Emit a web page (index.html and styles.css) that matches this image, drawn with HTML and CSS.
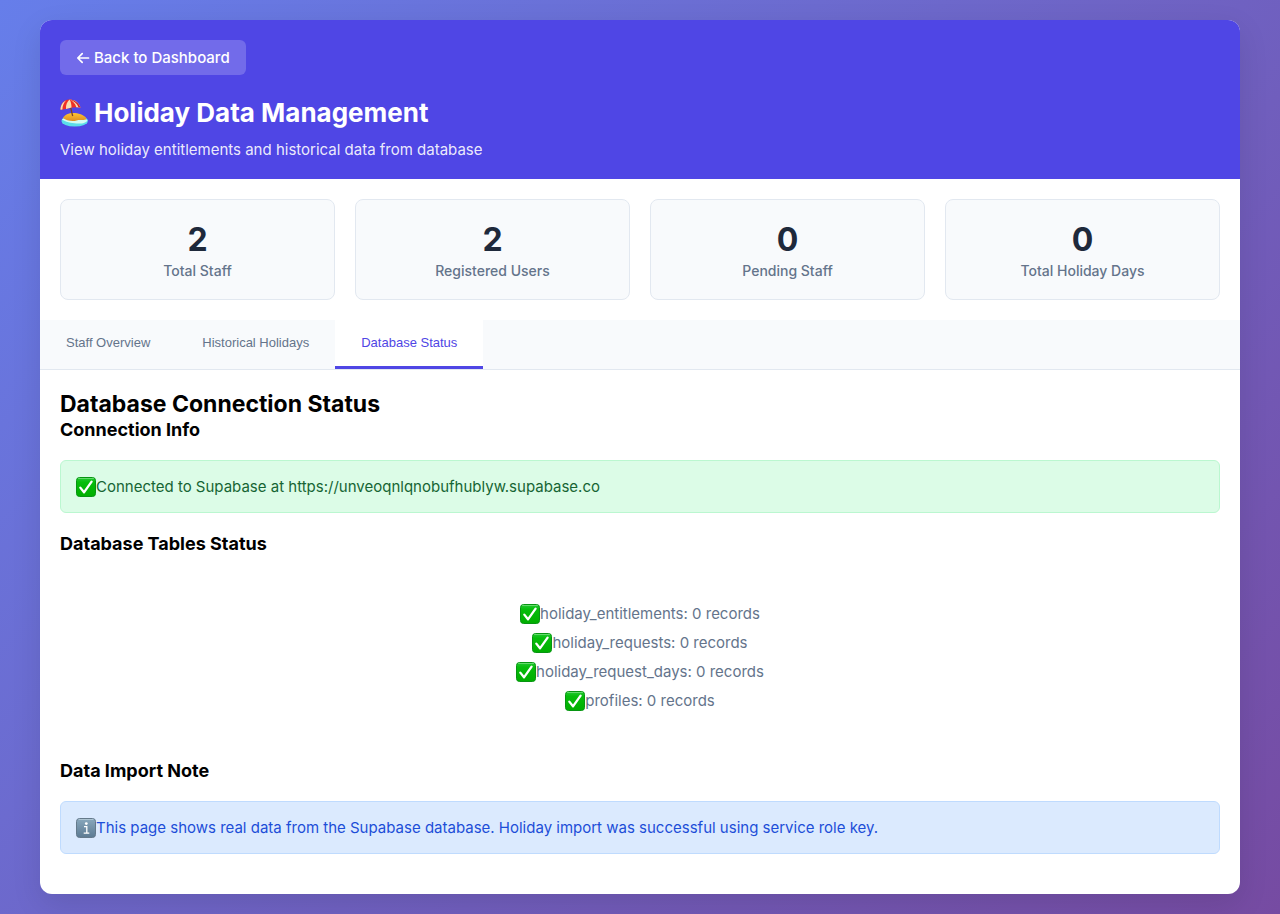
FILE: index.html
```html
<!DOCTYPE html>
<html lang="en">
<head>
<meta charset="utf-8">
<meta name="viewport" content="width=device-width, initial-scale=1">
<title>Holiday Data Management</title>
<link rel="stylesheet" href="styles.css">
</head>
<body>
<svg class="defs" aria-hidden="true">
  <defs>
    <linearGradient id="green" x1="0" y1="0" x2="0" y2="1"><stop offset="0" stop-color="#25c935"/><stop offset=".25" stop-color="#06bd0b"/><stop offset="1" stop-color="#00ae00"/></linearGradient>
    <linearGradient id="steel" x1="0" y1="0" x2="0" y2="1"><stop offset="0" stop-color="#89a8bd"/><stop offset="1" stop-color="#5c7a92"/></linearGradient>
    <linearGradient id="sand" x1="0" y1="0" x2="0" y2="1"><stop offset="0" stop-color="#ffc52e"/><stop offset="1" stop-color="#dc8d24"/></linearGradient>
    <symbol id="check" viewBox="0 0 20 20">
      <rect x=".5" y=".5" width="19" height="19" rx="3" fill="url(#green)" stroke="#079512"/>
      <path d="M2.5 1.5h15" stroke="#75df7b" stroke-width=".8" stroke-linecap="round"/>
      <path d="M4.300 10.600 8 15.300 15.600 4.600" fill="none" stroke="#fff" stroke-width="2.300" stroke-linecap="round" stroke-linejoin="round"/>
    </symbol>
  </defs>
</svg>
<main class="container">
  <header class="header">
    <a class="back" href="#"><svg class="arrow" viewBox="0 0 14 14" aria-hidden="true"><path d="M12.5 7H2M6.2 2.6 1.8 7l4.4 4.4"/></svg>Back to Dashboard</a>
    <h1 class="title"><svg class="beach" viewBox="0 0 28 28" aria-hidden="true">
      <ellipse cx="14.7" cy="22" rx="13.2" ry="5.6" fill="#5bdde9"/>
      <path d="M2 20.5C4 18 9 21 13 21s9-3 14.500 0c-1 3-6 4-11 3.500S5 23 2 20.500Z" fill="#d3fbf4"/>
      <path d="M3 19c1.500-3.500 7-5.500 12-5s11 3 11.500 6c-3 2-6 0-10 1.500S6 21.500 3 19Z" fill="url(#sand)"/>
      <path d="M10.500 8 12.700 17" stroke="#7b4528" stroke-width="1.300"/>
      <path d="M.5 10.800C.3 5 4 .5 9.500.6S19 4 20.500 8.600C17 8 13 8.200 10 9S4 10.500.5 10.800Z" fill="#ef3025"/>
      <path d="M.5 10.800C.4 7 2.500 3 6 1.500 3.500 4 2.500 7 2.400 10.600ZM9.500.6C7 3 5.800 6 6 9.900L11.500 8.600C11.500 5.500 11 3 9.500.6ZM9.500.6C13 2 15.500 5 16.300 8.200l4.200.4C19 4 15 .7 9.500.6Z" fill="#f7dfb2"/>
      <path d="M9.500.6C15 1 18.500 4 20.500 8.600L18.500 8.300C17 4.500 14 2 9.500.6Z" fill="#d51e22"/>
    </svg>Holiday Data Management</h1>
    <p class="subtitle">View holiday entitlements and historical data from database</p>
  </header>
  <section class="stats" aria-label="Summary">
    <div class="stat"><div class="number">2</div><div class="label">Total Staff</div></div>
    <div class="stat"><div class="number">2</div><div class="label">Registered Users</div></div>
    <div class="stat"><div class="number">0</div><div class="label">Pending Staff</div></div>
    <div class="stat"><div class="number">0</div><div class="label">Total Holiday Days</div></div>
  </section>
  <nav class="tabs">
    <button class="tab" type="button">Staff Overview</button>
    <button class="tab" type="button">Historical Holidays</button>
    <button class="tab active" type="button">Database Status</button>
  </nav>
  <section class="content">
    <h2 class="heading">Database Connection Status</h2>
    <h3 class="subheading">Connection Info</h3>
    <div class="alert success"><svg class="icon" aria-hidden="true"><use href="#check"/></svg>Connected to Supabase at https://unveoqnlqnobufhublyw.supabase.co</div>
    <h3 class="subheading">Database Tables Status</h3>
    <ul class="tables">
      <li class="row"><svg class="icon" aria-hidden="true"><use href="#check"/></svg>holiday_entitlements: 0 records</li>
      <li class="row"><svg class="icon" aria-hidden="true"><use href="#check"/></svg>holiday_requests: 0 records</li>
      <li class="row"><svg class="icon" aria-hidden="true"><use href="#check"/></svg>holiday_request_days: 0 records</li>
      <li class="row"><svg class="icon" aria-hidden="true"><use href="#check"/></svg>profiles: 0 records</li>
    </ul>
    <h3 class="subheading">Data Import Note</h3>
    <div class="alert info"><svg class="icon" viewBox="0 0 20 20" aria-hidden="true"><rect x=".5" y=".5" width="19" height="19" rx="3" fill="url(#steel)" stroke="#64798a"/><path d="M2.500 1.500h15" stroke="#b7cbd8" stroke-width=".8"/><circle cx="10.300" cy="5.600" r="1.400" fill="#fff"/><path d="M8 8.700h2.800v6M7.700 15.100h5.600" fill="none" stroke="#fff" stroke-width="1.300"/></svg>This page shows real data from the Supabase database. Holiday import was successful using service role key.</div>
  </section>
</main>
</body>
</html>
```
FILE: styles.css
```css
* { box-sizing: border-box; margin: 0; padding: 0; }
body {
  min-height: 100vh;
  padding: 20px;
  background: linear-gradient(135deg, #667eea 0%, #764ba2 100%);
  font: 15px/19px Inter, "Liberation Sans", sans-serif;
  color: #000;
}
.defs { position: absolute; width: 0; height: 0; }
.container {
  max-width: 1200px;
  margin: 0 auto;
  overflow: hidden;
  background: #fff;
  border-radius: 12px;
  box-shadow: 0 10px 30px rgba(0, 0, 0, .1);
}
.header { padding: 20px; background: #4f46e5; color: #fff; }
.back {
  display: inline-flex;
  align-items: center;
  gap: 4px;
  padding: 8px 16px;
  margin-bottom: 20px;
  border-radius: 6px;
  background: rgba(255, 255, 255, .2);
  color: #fff;
  font-weight: 500;
  text-decoration: none;
}
.arrow { width: 14px; height: 14px; fill: none; stroke: currentColor; stroke-width: 1.7; stroke-linecap: round; stroke-linejoin: round; }
.title { display: flex; align-items: center; gap: 6px; margin-bottom: 10px; font-size: 26px; line-height: 35px; }
.beach { width: 28px; height: 28px; }
.subtitle { color: rgba(255, 255, 255, .9); }
.stats { display: grid; grid-template-columns: repeat(auto-fit, minmax(200px, 1fr)); gap: 20px; padding: 20px; }
.stat { padding: 20px; border: 1px solid #e2e8f0; border-radius: 8px; background: #f8fafc; text-align: center; }
.number { margin-bottom: 4px; font-size: 32px; font-weight: 700; line-height: 39px; color: #1e293b; }
.label { font-size: 14px; font-weight: 500; line-height: 16px; color: #64748b; }
.tabs { display: flex; background: #f8fafc; border-bottom: 1px solid #e2e8f0; }
.tab {
  padding: 15px 26px;
  border: 0;
  border-bottom: 3px solid transparent;
  background: none;
  font: 500 13px/16px "Liberation Sans", Arial, sans-serif;
  color: #64748b;
  cursor: pointer;
}
.active { border-bottom-color: #4f46e5; background: #fff; color: #4f46e5; }
.content { padding: 20px; }
.heading { font-size: 23px; line-height: 29px; }
.subheading { font-size: 18px; line-height: 21px; }
.alert { display: flex; align-items: center; margin: 20px 0; padding: 15px; border: 1px solid; border-radius: 6px; line-height: 21px; }
.success { border-color: #bbf7d0; background: #dcfce7; color: #166534; }
.info { border-color: #bfdbfe; background: #dbeafe; color: #1d4ed8; }
.icon { flex: none; width: 20px; height: 20px; }
.tables { display: grid; gap: 8px; padding: 49px 40px; color: #64748b; list-style: none; }
.row { display: flex; align-items: center; justify-content: center; line-height: 21px; }
```
